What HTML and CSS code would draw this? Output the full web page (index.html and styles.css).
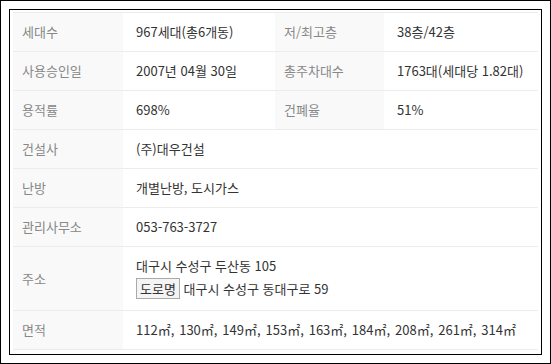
FILE: index.html
```html
<!DOCTYPE html>
<html lang="ko">
<head>
<meta charset="utf-8">
<link rel="stylesheet" href="styles.css">
</head>
<body>
<div class="frame">
  <div class="panel">
    <table class="info">
      <colgroup>
        <col class="c-label"><col class="c-value"><col class="c-label2"><col class="c-value2">
      </colgroup>
      <tr>
        <th>세대수</th><td>967세대(총6개동)</td>
        <th>저/최고층</th><td>38층/42층</td>
      </tr>
      <tr>
        <th>사용승인일</th><td>2007년 04월 30일</td>
        <th>총주차대수</th><td>1763대(세대당 1.82대)</td>
      </tr>
      <tr>
        <th>용적률</th><td>698%</td>
        <th>건폐율</th><td>51%</td>
      </tr>
      <tr>
        <th>건설사</th><td colspan="3">(주)대우건설</td>
      </tr>
      <tr>
        <th>난방</th><td colspan="3">개별난방, 도시가스</td>
      </tr>
      <tr>
        <th>관리사무소</th><td colspan="3">053-763-3727</td>
      </tr>
      <tr>
        <th>주소</th>
        <td colspan="3">
          <div class="addr">대구시 수성구 두산동 105</div>
          <div class="addr road"><span class="tag">도로명</span> 대구시 수성구 동대구로 59</div>
        </td>
      </tr>
      <tr>
        <th>면적</th><td colspan="3" class="areas">112㎡, 130㎡, 149㎡, 153㎡, 163㎡, 184㎡, 208㎡, 261㎡, 314㎡</td>
      </tr>
    </table>
  </div>
</div>
</body>
</html>
```
FILE: styles.css
```css
html, body {
  margin: 0;
  padding: 0;
  background: #fff;
}
body {
  font-family: "Noto Sans CJK KR", "Noto Sans", sans-serif;
  font-size: 13px;
  color: #333;
}
.frame {
  box-sizing: border-box;
  width: 551px;
  height: 364px;
  border: 1px solid #000;
  padding: 8px;
}
.panel {
  box-sizing: border-box;
  height: 346px;
  border: 1px solid #000;
  padding: 2px 3px;
}
.info {
  width: 525px;
  table-layout: fixed;
  border-collapse: collapse;
  border-top: 1px solid #ececec;
}
.c-label { width: 110px; }
.c-value { width: 152px; }
.c-label2 { width: 109px; }
.c-value2 { width: 154px; }
.info tr {
  border-bottom: 1px solid #ececec;
}
.info th {
  background: #f9f9f9;
  color: #888;
  font-weight: normal;
  text-align: left;
  padding: 10px 9px;
  line-height: 18px;
  height: 18px;
  vertical-align: middle;
  white-space: nowrap;
}
.info td {
  text-align: left;
  padding: 10px 0 10px 13px;
  line-height: 18px;
  height: 18px;
  color: #333;
  vertical-align: middle;
  white-space: nowrap;
}
.info td.areas {
  word-spacing: 2px;
}
.addr.road {
  margin-top: 3px;
  line-height: 22px;
}
.tag {
  display: inline-block;
  box-sizing: border-box;
  height: 21px;
  line-height: 19px;
  padding: 0 3px;
  border: 1px solid #aaa;
  background: #f4f4f4;
  color: #333;
  vertical-align: top;
}
```
